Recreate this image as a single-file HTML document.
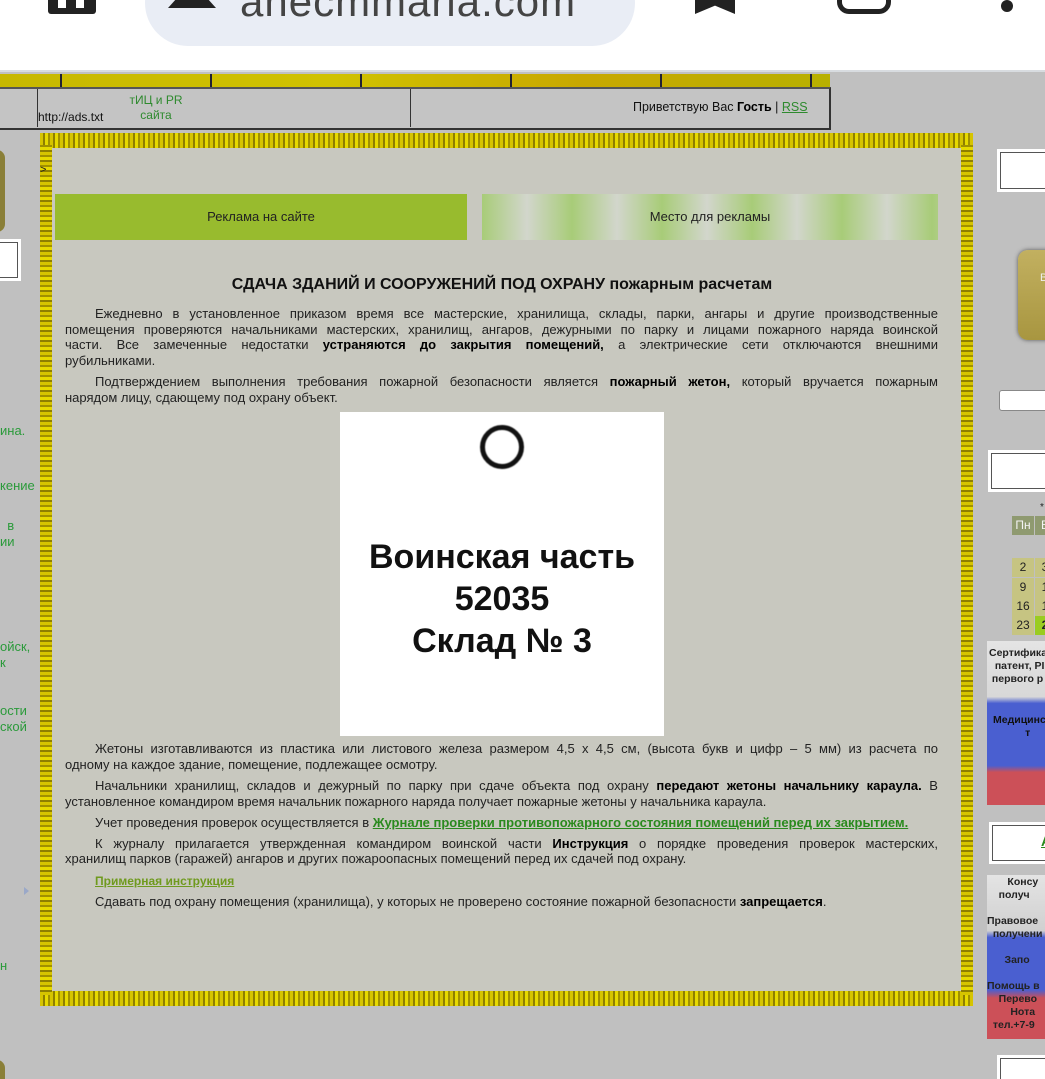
<!DOCTYPE html>
<html><head><meta charset="utf-8">
<style>
*{margin:0;padding:0;box-sizing:border-box}
html,body{width:1045px;height:1079px;overflow:hidden}
body{background:#c0c0c0;font-family:"Liberation Sans","DejaVu Sans",sans-serif;position:relative;color:#222}
.a{position:absolute}
.top{left:0;top:0;width:1045px;height:72px;background:#fff;border-bottom:2px solid #d8dce0}
.pill{left:145px;top:-40px;width:490px;height:86px;background:#e9edf5;border-radius:43px}
.gold{background:repeating-linear-gradient(90deg,#d6c400 0 3px,#8e7f00 3px 5px,#e6d900 5px 8px,#a09000 8px 10px)}
.goldv{background:repeating-linear-gradient(0deg,#d6c400 0 3px,#8e7f00 3px 5px,#e6d900 5px 8px,#a09000 8px 10px)}
.ln{position:absolute;left:65px;width:873px;font-size:13px;line-height:16px;text-align:justify;text-align-last:justify;white-space:nowrap;color:#222}
.ln.l{text-align-last:left;text-align:left}
.ind{padding-left:30px}
b{color:#000}
.g{color:#2a9a3a;font-size:13px;line-height:16px}
.wb{background:#fff;border:2px solid #fff;outline:1px solid #555;outline-offset:-4px}
.cal{font-size:12px;text-align:center;line-height:19px;color:#222}
</style></head><body>
<div class="a top"></div>
<div class="a pill"></div>
<div class="a" style="left:48px;top:0;width:48px;height:14px;background:#222;border-radius:0 0 3px 3px"></div>
<div class="a" style="left:58px;top:0;width:8px;height:8px;background:#fff"></div>
<div class="a" style="left:76px;top:0;width:8px;height:8px;background:#fff"></div>
<div class="a" style="left:168px;top:0;width:48px;height:8px;background:#222;clip-path:polygon(15% 0,85% 0,100% 100%,0 100%)"></div>
<div class="a" style="left:240px;top:-22px;font-size:42px;color:#444;letter-spacing:1px">anecmmaria.com</div>
<div class="a" style="left:695px;top:0;width:40px;height:14px;background:#222;clip-path:polygon(0 0,100% 0,100% 100%,50% 40%,0 100%)"></div>
<div class="a" style="left:837px;top:-10px;width:54px;height:24px;border:5px solid #222;border-radius:0 0 12px 12px;border-top:none"></div>
<div class="a" style="left:1001px;top:0;width:12px;height:12px;background:#222;border-radius:50%"></div>

<div class="a" style="left:0;top:74px;width:830px;height:13px;background:linear-gradient(90deg,#c7b800,#d0c200 40%,#c8a800 70%,#b8b000);"></div>
<div class="a" style="left:0;top:74px;width:830px;height:13px;background:repeating-linear-gradient(90deg,transparent 0 60px,#223 60px 62px,transparent 62px 150px)"></div>
<div class="a" style="left:0;top:87px;width:831px;height:43px;background:#c4c4c4;border:2px solid #333;border-left:none;border-top-color:#555"></div>
<div class="a" style="left:37px;top:89px;width:1px;height:38px;background:#333"></div>
<div class="a" style="left:410px;top:89px;width:1px;height:38px;background:#333"></div>
<div class="a" style="left:38px;top:110px;font-size:12px;color:#111">http://ads.txt</div>
<div class="a" style="left:122px;top:93px;font-size:12px;color:#2e8a2e;line-height:15px;text-align:center;width:68px">тИЦ и PR<br>сайта</div>
<div class="a" style="left:633px;top:100px;font-size:12.5px;color:#111">Приветствую Вас <b>Гость</b> | <span style="color:#2e8a2e;text-decoration:underline">RSS</span></div>

<div class="a gold" style="left:40px;top:133px;width:933px;height:873px"></div>
<div class="a goldv" style="left:40px;top:145px;width:12px;height:850px"></div>
<div class="a goldv" style="left:961px;top:145px;width:12px;height:850px"></div>
<div class="a" style="left:52px;top:148px;width:909px;height:843px;background:#c8c8bf"></div>
<div class="a" style="left:40px;top:164px;font-size:11px">&gt;</div>

<div class="a" style="left:55px;top:194px;width:412px;height:46px;background:#98bb2e;font-size:13px;line-height:46px;text-align:center;color:#222">Реклама на сайте</div>
<div class="a" style="left:482px;top:194px;width:456px;height:46px;background:repeating-linear-gradient(90deg,#a8cc78 0,#d2d6cc 45px,#a8cc78 90px);font-size:13px;line-height:46px;text-align:center;color:#222">Место для рекламы</div>

<div class="a" style="left:52px;top:276px;width:900px;text-align:center;font-size:16px;font-weight:bold;color:#111">СДАЧА ЗДАНИЙ И СООРУЖЕНИЙ ПОД ОХРАНУ пожарным расчетам</div>

<div class="ln ind" style="top:306px">Ежедневно в установленное приказом время все мастерские, хранилища, склады, парки, ангары и другие производственные</div>
<div class="ln" style="top:322px">помещения проверяются начальниками мастерских, хранилищ, ангаров, дежурными по парку и лицами пожарного наряда воинской</div>
<div class="ln" style="top:337px">части. Все замеченные недостатки <b>устраняются до закрытия помещений,</b> а электрические сети отключаются внешними</div>
<div class="ln l" style="top:353px">рубильниками.</div>
<div class="ln ind" style="top:374px">Подтверждением выполнения требования пожарной безопасности является <b>пожарный жетон,</b> который вручается пожарным</div>
<div class="ln l" style="top:390px">нарядом лицу, сдающему под охрану объект.</div>

<div class="a" style="left:340px;top:412px;width:324px;height:324px;background:#fff"></div>
<div class="a" style="left:480px;top:425px;width:44px;height:44px;border:5px solid #111;border-radius:50%;filter:blur(.6px)"></div>
<div class="a" style="left:340px;top:536px;width:324px;text-align:center;font-size:34px;font-weight:bold;line-height:42px;color:#111;white-space:nowrap">Воинская часть<br>52035<br>Склад № 3</div>

<div class="ln ind" style="top:741px">Жетоны изготавливаются из пластика или листового железа размером 4,5 х 4,5 см, (высота букв и цифр – 5 мм) из расчета по</div>
<div class="ln l" style="top:757px">одному на каждое здание, помещение, подлежащее осмотру.</div>
<div class="ln ind" style="top:778px">Начальники хранилищ, складов и дежурный по парку при сдаче объекта под охрану <b>передают жетоны начальнику караула.</b> В</div>
<div class="ln l" style="top:794px">установленное командиром время начальник пожарного наряда получает пожарные жетоны у начальника караула.</div>
<div class="ln l ind" style="top:815px">Учет проведения проверок осуществляется в <b style="color:#2a8a1e;text-decoration:underline">Журнале проверки противопожарного состояния помещений перед их закрытием.</b></div>
<div class="ln ind" style="top:836px">К журналу прилагается утвержденная командиром воинской части <b>Инструкция</b> о порядке проведения проверок мастерских,</div>
<div class="ln l" style="top:851px">хранилищ парков (гаражей) ангаров и других пожароопасных помещений перед их сдачей под охрану.</div>
<div class="ln l ind" style="top:873px;font-size:12px"><b style="color:#6f9a1e;text-decoration:underline">Примерная инструкция</b></div>
<div class="ln l ind" style="top:894px">Сдавать под охрану помещения (хранилища), у которых не проверено состояние пожарной безопасности <b>запрещается</b>.</div>

<div class="a" style="left:-20px;top:150px;width:25px;height:82px;background:#8a7f38;border-radius:8px"></div>
<div class="a wb" style="left:-10px;top:239px;width:31px;height:42px"></div>
<div class="a g" style="left:0;top:423px">ина.</div>
<div class="a g" style="left:0;top:478px">кение</div>
<div class="a g" style="left:0;top:518px">&nbsp;&nbsp;в<br>ии</div>
<div class="a g" style="left:0;top:639px">ойск,<br>к</div>
<div class="a g" style="left:0;top:703px">ости<br>ской</div>
<div class="a" style="left:24px;top:887px;width:0;height:0;border-left:5px solid #9aa8c8;border-top:4px solid transparent;border-bottom:4px solid transparent"></div>
<div class="a g" style="left:0;top:958px">н</div>

<div class="a wb" style="left:997px;top:149px;width:60px;height:43px"></div>
<div class="a" style="left:1018px;top:250px;width:40px;height:90px;background:linear-gradient(#c2b060,#a89640);border-radius:10px;box-shadow:0 0 4px #555;font-size:11px;color:#eee;padding:22px 0 0 22px">В</div>
<div class="a" style="left:999px;top:390px;width:60px;height:21px;background:#fff;border:1px solid #888;border-radius:3px"></div>
<div class="a wb" style="left:988px;top:450px;width:70px;height:42px"></div>
<div class="a" style="left:1040px;top:502px;font-size:10px">*</div>
<div class="a cal" style="left:1012px;top:516px;width:22px;background:#8f9a70;color:#f4f4f4">Пн</div>
<div class="a cal" style="left:1035px;top:516px;width:20px;background:#8f9a70;color:#f4f4f4">В</div>
<div class="a cal" style="left:1012px;top:558px;width:22px;background:#c6c482">2</div>
<div class="a cal" style="left:1035px;top:558px;width:20px;background:#c6c482">3</div>
<div class="a cal" style="left:1012px;top:578px;width:22px;background:#c6c482">9</div>
<div class="a cal" style="left:1035px;top:578px;width:20px;background:#c6c482">1</div>
<div class="a cal" style="left:1012px;top:597px;width:22px;background:#c6c482">16</div>
<div class="a cal" style="left:1035px;top:597px;width:20px;background:#c6c482">1</div>
<div class="a cal" style="left:1012px;top:616px;width:22px;background:#c6c482">23</div>
<div class="a cal" style="left:1035px;top:616px;width:20px;background:#9acc20;font-weight:bold">2</div>

<div class="a" style="left:987px;top:641px;width:70px;height:164px;background:linear-gradient(#e4e4e4 0,#d8d8d8 34%,#4a5fd0 38%,#4a5fd0 76%,#cc5058 80%,#cc5058 100%);font-size:10.5px;font-weight:bold;line-height:13px;color:#222;padding:6px 0 0 2px;white-space:nowrap">Сертифика<br>&nbsp;&nbsp;патент, РI<br>&nbsp;первого р<div style="margin-top:28px;color:#111;padding-left:4px">Медицинс<br>&nbsp;&nbsp;&nbsp;&nbsp;&nbsp;&nbsp;&nbsp;&nbsp;&nbsp;&nbsp;&nbsp;т</div></div>
<div class="a wb" style="left:989px;top:822px;width:70px;height:42px;font-size:14px;font-weight:bold;color:#2a8a1e;padding:9px 0 0 50px;text-decoration:underline">А</div>
<div class="a" style="left:987px;top:875px;width:70px;height:164px;background:linear-gradient(#e4e4e4 0,#d0d0d0 34%,#4a5fd0 38%,#4a5fd0 70%,#cc5058 75%,#cc5058 100%);font-size:10.5px;font-weight:bold;line-height:13px;color:#222;padding:1px 0 0 0;white-space:nowrap">&nbsp;&nbsp;&nbsp;&nbsp;&nbsp;&nbsp;&nbsp;Консу<br>&nbsp;&nbsp;&nbsp;&nbsp;получ<br><br>Правовое<br>&nbsp;&nbsp;получени<br><br>&nbsp;&nbsp;&nbsp;&nbsp;&nbsp;&nbsp;Запо<br><br>Помощь в<br>&nbsp;&nbsp;&nbsp;&nbsp;Перево<br>&nbsp;&nbsp;&nbsp;&nbsp;&nbsp;&nbsp;&nbsp;&nbsp;Нота<br>&nbsp;&nbsp;тел.+7-9</div>
<div class="a wb" style="left:997px;top:1055px;width:60px;height:40px"></div>
<div class="a" style="left:-20px;top:1060px;width:25px;height:40px;background:#8a7f38;border-radius:8px"></div>
</body></html>
